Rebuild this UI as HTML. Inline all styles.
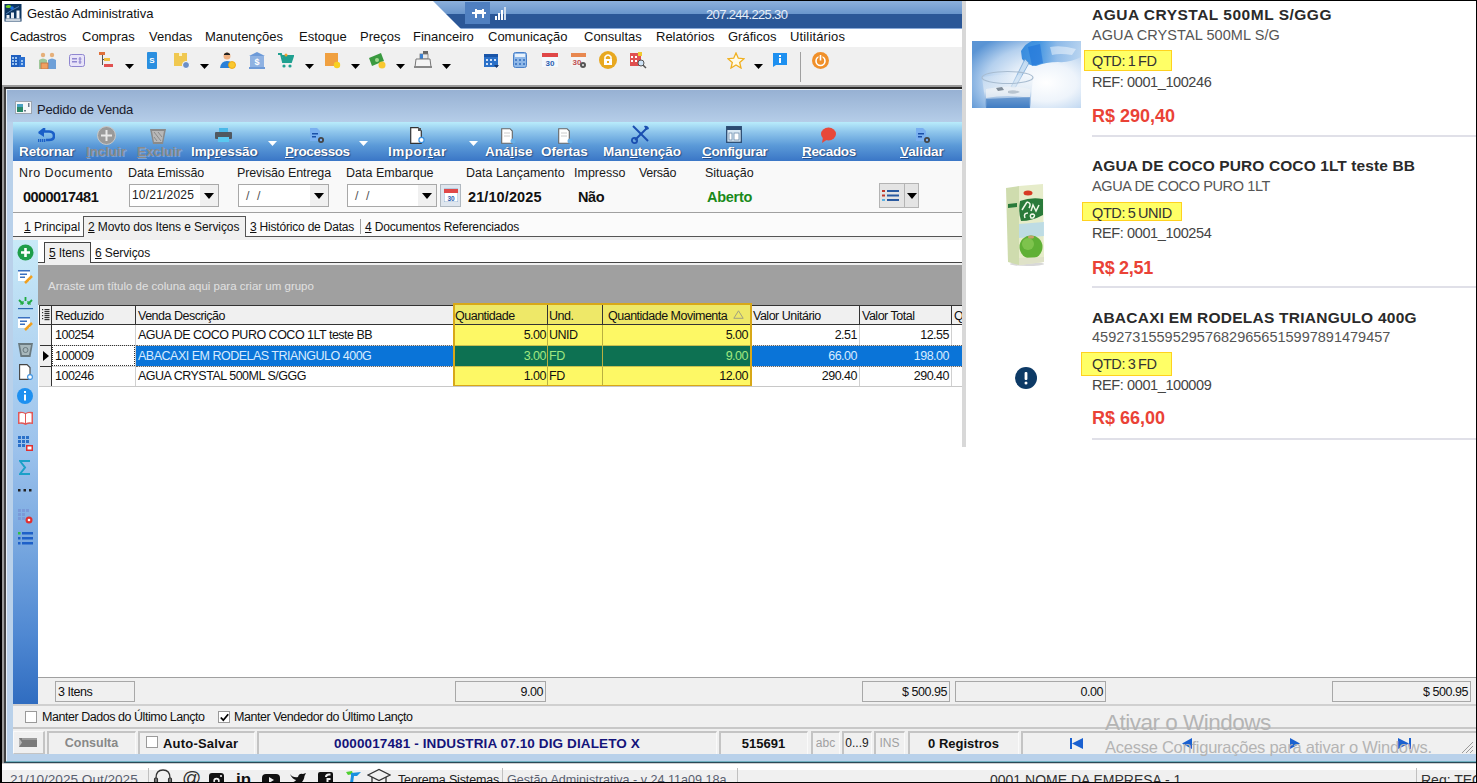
<!DOCTYPE html>
<html><head><meta charset="utf-8">
<style>
*{margin:0;padding:0;box-sizing:border-box}
html,body{width:1477px;height:783px;overflow:hidden;background:#fff;position:relative;font-family:"Liberation Sans",sans-serif;color:#000}
.a{position:absolute}
.t{position:absolute;white-space:nowrap;font-family:"Liberation Sans",sans-serif}
.u{text-decoration:underline}
</style></head><body>
<!-- outer black border -->
<div class="a" style="left:0;top:0;width:1477px;height:1px;background:#000"></div>
<div class="a" style="left:0;top:0;width:2px;height:783px;background:#000"></div>

<!-- title bar -->
<div class="a" style="left:2px;top:1px;width:960px;height:46px;background:#fff"></div>

<!-- RDP bar -->
<div class="a" style="left:433px;top:1px;width:530px;height:28px;background:linear-gradient(#8cb0dc 0,#6a96cc 13px,#2b5797 13px,#2b5797 27px,#8aaad8 27px,#8aaad8 28px);clip-path:polygon(0 0,100% 0,100% 100%,28px 100%)"></div>

<!-- menu bar -->

<!-- toolbar -->
<div class="a" style="left:2px;top:47px;width:960px;height:38px;background:#f0f0f0"></div>
<div class="a" style="left:2px;top:85px;width:960px;height:3px;background:#9a9a9a"></div>

<!-- app icon -->
<svg class="a" style="left:4px;top:4px" width="18" height="18" viewBox="0 0 18 18"><rect x="0.5" y="0" width="17" height="17.5" fill="#0c3560"/><rect x="2.5" y="11" width="3" height="3.5" fill="#e8eef5"/><rect x="7" y="8.5" width="3" height="6" fill="#e8eef5"/><rect x="12.5" y="6.5" width="3" height="8" fill="#f4f8fc"/><rect x="1.5" y="14.5" width="15" height="2.5" fill="#c8d2dc"/><ellipse cx="4.5" cy="2.5" rx="2.8" ry="1.6" fill="#70d020"/><path d="M2 10 L8 6 L15 2.5" stroke="#5a88c0" stroke-width="0.9" fill="none"/><circle cx="8" cy="4" r="1.8" fill="#1a70e0"/></svg>
<div class="t" style="left:27px;top:6px;font-size:13px;line-height:16px;color:#111">Gestão Administrativa</div>
<!-- rdp icons -->
<div class="a" style="left:465px;top:2px;width:25px;height:22px;background:#4f7fc0"></div>
<svg class="a" style="left:472px;top:8px" width="14" height="11" viewBox="0 0 14 11"><rect x="0" y="4" width="14" height="2" fill="#fff"/><rect x="3" y="1" width="2" height="9" fill="#fff"/><rect x="10" y="1" width="2" height="9" fill="#fff"/><rect x="5" y="2" width="5" height="2" fill="#fff"/></svg>
<svg class="a" style="left:495px;top:6px" width="13" height="14" viewBox="0 0 13 14"><rect x="0" y="10" width="2" height="4" fill="#fff"/><rect x="3" y="7" width="2" height="7" fill="#fff"/><rect x="6" y="4" width="2" height="10" fill="#fff"/><rect x="9" y="1" width="2" height="13" fill="#cfdcec"/></svg>
<div class="t" style="left:706px;top:7px;font-size:13px;line-height:15px;color:#e6eef8;letter-spacing:-0.65px">207.244.225.30</div>
<!-- menu -->
<div class="t" style="left:10px;top:29px;font-size:13px;line-height:15px;color:#111;letter-spacing:-0.35px">Cadastros</div>
<div class="t" style="left:82px;top:29px;font-size:13px;line-height:15px;color:#111;letter-spacing:0px">Compras</div>
<div class="t" style="left:149px;top:29px;font-size:13px;line-height:15px;color:#111;letter-spacing:0px">Vendas</div>
<div class="t" style="left:205px;top:29px;font-size:13px;line-height:15px;color:#111;letter-spacing:0px">Manutenções</div>
<div class="t" style="left:299px;top:29px;font-size:13px;line-height:15px;color:#111;letter-spacing:0px">Estoque</div>
<div class="t" style="left:360px;top:29px;font-size:13px;line-height:15px;color:#111;letter-spacing:0px">Preços</div>
<div class="t" style="left:413px;top:29px;font-size:13px;line-height:15px;color:#111;letter-spacing:0px">Financeiro</div>
<div class="t" style="left:488px;top:29px;font-size:13px;line-height:15px;color:#111;letter-spacing:0px">Comunicação</div>
<div class="t" style="left:584px;top:29px;font-size:13px;line-height:15px;color:#111;letter-spacing:0px">Consultas</div>
<div class="t" style="left:656px;top:29px;font-size:13px;line-height:15px;color:#111;letter-spacing:0px">Relatórios</div>
<div class="t" style="left:728px;top:29px;font-size:13px;line-height:15px;color:#111;letter-spacing:0px">Gráficos</div>
<div class="t" style="left:790px;top:29px;font-size:13px;line-height:15px;color:#111;letter-spacing:0.15px">Utilitários</div>
<!-- toolbar icons -->
<svg class="a" style="left:11px;top:54px" width="14" height="13" viewBox="0 0 14 13"><rect x="0" y="1" width="10" height="12" fill="#1f5fbf"/><rect x="8" y="3" width="6" height="10" fill="#2a6fd0"/><g fill="#9cc4f0"><rect x="1" y="3" width="2" height="2"/><rect x="4" y="3" width="2" height="2"/><rect x="1" y="6" width="2" height="2"/><rect x="4" y="6" width="2" height="2"/><rect x="1" y="9" width="2" height="2"/><rect x="4" y="9" width="2" height="2"/><rect x="10" y="6" width="2" height="2"/><rect x="10" y="9" width="2" height="2"/></g></svg>
<svg class="a" style="left:38px;top:52px" width="19" height="17" viewBox="0 0 19 17"><circle cx="5" cy="3" r="2.2" fill="#e6b07a"/><path d="M1 8 Q5 5 9 8 L9 17 L1 17Z" fill="#9fc79a"/><circle cx="14" cy="3" r="2.2" fill="#e6b07a"/><path d="M10 8 Q14 5 18 8 L18 17 L10 17Z" fill="#6ea0d8"/><rect x="3" y="11" width="7" height="6" fill="#f0a060" stroke="#c07040" stroke-width="0.8"/></svg>
<svg class="a" style="left:69px;top:54px" width="16" height="13" viewBox="0 0 16 13"><rect x="0.5" y="0.5" width="15" height="12" rx="2" fill="#e8e4f8" stroke="#8f86d0"/><rect x="3" y="4" width="5" height="1.5" fill="#8f86d0"/><rect x="3" y="7" width="5" height="1.5" fill="#8f86d0"/><path d="M11 3 L11 10 M9.5 5 L12.5 5 M9.5 8 L12.5 8" stroke="#8f86d0" stroke-width="1.2"/></svg>
<svg class="a" style="left:99px;top:52px" width="15" height="16" viewBox="0 0 15 16"><rect x="0" y="0" width="6" height="3" fill="#e0703a"/><rect x="3" y="3" width="1" height="10" fill="#555"/><rect x="5" y="6" width="6" height="3" fill="#f0c040"/><rect x="5" y="12" width="9" height="3" fill="#e05050"/><rect x="3" y="7" width="2" height="1" fill="#555"/></svg>
<svg class="a" style="left:125px;top:64px" width="9" height="5" viewBox="0 0 9 5"><path d="M0 0 L9 0 L4.5 5Z" fill="#000"/></svg>
<svg class="a" style="left:147px;top:52px" width="10" height="17" viewBox="0 0 10 17"><rect x="0" y="0" width="10" height="17" rx="1" fill="#2a8fe0"/><text x="5" y="11" font-size="8" fill="#fff" text-anchor="middle" font-family="Liberation Sans" font-weight="700">S</text></svg>
<svg class="a" style="left:174px;top:53px" width="16" height="16" viewBox="0 0 16 16"><rect x="0" y="0" width="13" height="13" fill="#f0c850"/><rect x="5" y="0" width="3" height="3" fill="#fff3c0"/><circle cx="12" cy="12" r="3.5" fill="#6b8fc8" stroke="#fff" stroke-width="1"/></svg>
<svg class="a" style="left:200px;top:64px" width="9" height="5" viewBox="0 0 9 5"><path d="M0 0 L9 0 L4.5 5Z" fill="#000"/></svg>
<svg class="a" style="left:220px;top:52px" width="16" height="17" viewBox="0 0 16 17"><circle cx="7" cy="4" r="3.5" fill="#f0b080"/><path d="M4 2 Q7 -1 10 2 L10 3 L4 3Z" fill="#222"/><path d="M0 16 Q1 9 7 9 Q12 9 13 13 L13 16Z" fill="#2a80d8"/><circle cx="12" cy="13" r="3.5" fill="#f8c830" stroke="#f0a000" stroke-width="0.8"/></svg>
<svg class="a" style="left:249px;top:52px" width="16" height="17" viewBox="0 0 16 17"><path d="M8 0 L16 4 L0 4Z" fill="#6d9ad8"/><rect x="1" y="4" width="14" height="11" fill="#8fb2e2"/><rect x="0" y="15" width="16" height="2" fill="#6d9ad8"/><text x="8" y="13" font-size="9" fill="#fff" text-anchor="middle" font-family="Liberation Sans" font-weight="700">$</text></svg>
<svg class="a" style="left:278px;top:53px" width="16" height="15" viewBox="0 0 16 15"><path d="M0 1 L3 1 L5 9 L13 9 L15 3 L4 3" stroke="#20a090" stroke-width="2" fill="none"/><rect x="5" y="3" width="9" height="5" fill="#20a090"/><circle cx="6" cy="13" r="1.6" fill="#20a090"/><circle cx="12" cy="13" r="1.6" fill="#20a090"/><circle cx="8" cy="2" r="1.5" fill="#f0a030"/></svg>
<svg class="a" style="left:305px;top:64px" width="9" height="5" viewBox="0 0 9 5"><path d="M0 0 L9 0 L4.5 5Z" fill="#000"/></svg>
<svg class="a" style="left:325px;top:53px" width="16" height="16" viewBox="0 0 16 16"><rect x="0" y="0" width="13" height="13" fill="#f0a040"/><circle cx="12" cy="12" r="3.2" fill="#f8d020"/></svg>
<svg class="a" style="left:351px;top:64px" width="9" height="5" viewBox="0 0 9 5"><path d="M0 0 L9 0 L4.5 5Z" fill="#000"/></svg>
<svg class="a" style="left:369px;top:53px" width="18" height="16" viewBox="0 0 18 16"><path d="M0 5 L12 0 L15 8 L3 13Z" fill="#3a9a40"/><circle cx="8" cy="7" r="2" fill="#a0d890"/><circle cx="13" cy="12" r="3.5" fill="#f8c830"/></svg>
<svg class="a" style="left:396px;top:64px" width="9" height="5" viewBox="0 0 9 5"><path d="M0 0 L9 0 L4.5 5Z" fill="#000"/></svg>
<svg class="a" style="left:414px;top:51px" width="18" height="18" viewBox="0 0 18 18"><rect x="9" y="0" width="5" height="3" fill="#666"/><rect x="6" y="3" width="8" height="5" fill="#e8e8e8" stroke="#777" stroke-width="0.8"/><rect x="6" y="3" width="3" height="5" fill="#3a80d0"/><path d="M2 8 L16 8 L17 16 L1 16Z" fill="#f4f4f4" stroke="#777" stroke-width="1"/><rect x="0" y="15" width="18" height="2" fill="#888"/></svg>
<svg class="a" style="left:442px;top:64px" width="9" height="5" viewBox="0 0 9 5"><path d="M0 0 L9 0 L4.5 5Z" fill="#000"/></svg>
<svg class="a" style="left:484px;top:53px" width="15" height="15" viewBox="0 0 15 15"><rect x="0" y="1" width="14" height="13" fill="#2a70c8"/><rect x="0" y="1" width="14" height="3" fill="#1a55a8"/><g fill="#cfe0f8"><rect x="2" y="6" width="2" height="2"/><rect x="6" y="6" width="2" height="2"/><rect x="10" y="6" width="2" height="2"/><rect x="2" y="10" width="2" height="2"/><rect x="6" y="10" width="2" height="2"/></g><path d="M10 12 L15 12 L12.5 15Z" fill="#1a3a70"/></svg>
<svg class="a" style="left:513px;top:52px" width="14" height="16" viewBox="0 0 14 16"><rect x="0.5" y="0.5" width="13" height="15" rx="2" fill="#8fb8e8" stroke="#4a80c8"/><rect x="2" y="2" width="10" height="3" fill="#e8f2fc"/><g fill="#4a80c8"><rect x="2" y="7" width="2" height="2"/><rect x="6" y="7" width="2" height="2"/><rect x="10" y="7" width="2" height="2"/><rect x="2" y="11" width="2" height="2"/><rect x="6" y="11" width="2" height="2"/><rect x="10" y="11" width="2" height="2"/></g></svg>
<svg class="a" style="left:542px;top:52px" width="16" height="16" viewBox="0 0 16 16"><rect x="0" y="1" width="16" height="14" fill="#f4f8fc"/><rect x="0" y="1" width="16" height="4" fill="#e04848"/><text x="8" y="13.5" font-size="8" fill="#2a60b0" text-anchor="middle" font-family="Liberation Sans" font-weight="700">30</text></svg>
<svg class="a" style="left:571px;top:52px" width="16" height="17" viewBox="0 0 16 17"><rect x="0" y="1" width="15" height="13" fill="#f4f4f4"/><rect x="0" y="1" width="15" height="4" fill="#e88850"/><text x="6" y="13" font-size="8" fill="#c05050" text-anchor="middle" font-family="Liberation Sans" font-weight="700">30</text><circle cx="12" cy="13" r="3" fill="#555"/><circle cx="12" cy="13" r="1" fill="#eee"/></svg>
<svg class="a" style="left:599px;top:51px" width="18" height="18" viewBox="0 0 18 18"><circle cx="9" cy="9" r="9" fill="#e8a820"/><path d="M6 8 L6 6 Q9 2 12 6 L12 8" stroke="#fff" stroke-width="1.5" fill="none"/><rect x="5" y="8" width="8" height="6" fill="#fff"/><rect x="8" y="10" width="2" height="2" fill="#e8a820"/></svg>
<svg class="a" style="left:630px;top:52px" width="17" height="17" viewBox="0 0 17 17"><rect x="0" y="1" width="11" height="13" fill="#e05050"/><g fill="#fff"><rect x="1" y="4" width="2" height="2"/><rect x="5" y="4" width="2" height="2"/><rect x="1" y="8" width="2" height="2"/><rect x="5" y="8" width="2" height="2"/></g><rect x="8" y="0" width="4" height="4" fill="#f0c830"/><circle cx="11" cy="11" r="3" fill="#cfe4f8" stroke="#555" stroke-width="1"/><path d="M13 13 L16 16" stroke="#555" stroke-width="1.5"/></svg>
<svg class="a" style="left:727px;top:52px" width="18" height="17" viewBox="0 0 18 17"><path d="M9 1 L11.3 6.2 L17 6.7 L12.7 10.4 L14 16 L9 13 L4 16 L5.3 10.4 L1 6.7 L6.7 6.2Z" fill="#fffbe8" stroke="#f0b020" stroke-width="1.3"/></svg>
<svg class="a" style="left:754px;top:64px" width="9" height="5" viewBox="0 0 9 5"><path d="M0 0 L9 0 L4.5 5Z" fill="#000"/></svg>
<svg class="a" style="left:773px;top:53px" width="14" height="14" viewBox="0 0 14 14"><path d="M0 0 L14 0 L14 12 L3 12 L0 14Z" fill="#1e90f0"/><rect x="6" y="2" width="2" height="2" fill="#fff"/><rect x="6" y="5" width="2" height="5" fill="#fff"/></svg>
<div class="a" style="left:800px;top:52px;width:1px;height:30px;background:#a0a0a0"></div>
<svg class="a" style="left:812px;top:52px" width="17" height="17" viewBox="0 0 17 17"><circle cx="8.5" cy="8.5" r="8.5" fill="#f0902a"/><circle cx="8.5" cy="9" r="4.5" stroke="#fff" stroke-width="1.6" fill="none"/><rect x="6.5" y="2" width="4" height="6" fill="#f0902a"/><rect x="7.7" y="3" width="1.6" height="5.5" fill="#fff"/></svg>

<!-- child window frame -->
<div class="a" style="left:2px;top:88px;width:1475px;height:676px;background:#b9d1ea"></div>
<div class="a" style="left:2px;top:85px;width:2px;height:678px;background:#9a9a9a"></div>
<div class="a" style="left:4px;top:87px;width:2px;height:676px;background:#404040"></div>
<div class="a" style="left:4px;top:87px;width:1473px;height:2px;background:#2a2a2a"></div>
<div class="a" style="left:6px;top:89px;width:1px;height:672px;background:#e8f0f8"></div>
<div class="a" style="left:6px;top:89px;width:1471px;height:1px;background:#e8f0f8"></div>
<div class="a" style="left:7px;top:90px;width:1470px;height:32px;background:linear-gradient(#97b1d3,#b5cde8)"></div>

<!-- blue toolbar -->
<div class="a" style="left:13px;top:122px;width:1464px;height:39px;background:linear-gradient(#b9ecfb 0,#8fc6ec 25%,#5b9ad8 60%,#3a76c6 100%)"></div>

<!-- form area -->
<div class="a" style="left:13px;top:161px;width:1464px;height:51px;background:#f9f9f9"></div>
<div class="a" style="left:13px;top:212px;width:1464px;height:1px;background:#a0a0a0"></div>

<!-- tab strip -->
<div class="a" style="left:13px;top:213px;width:1464px;height:24px;background:#fbfbfb"></div>

<!-- child title -->
<svg class="a" style="left:15px;top:101px" width="17" height="13" viewBox="0 0 17 13"><rect x="0.5" y="0.5" width="16" height="12" fill="#f4f6f8" stroke="#9aa4b0"/><rect x="2" y="3" width="6" height="8" fill="#2a8a6a"/><rect x="2" y="3" width="6" height="3" fill="#4aa0c0"/><rect x="13" y="2" width="1.5" height="4" fill="#6a7a8a"/><rect x="9" y="9" width="2" height="1.5" fill="#6a7a8a"/></svg>
<div class="t" style="left:37px;top:102px;font-size:13px;line-height:15px;color:#1a1a2a;letter-spacing:-0.2px">Pedido de Venda</div>
<!-- blue toolbar content -->
<style>.tb{position:absolute;white-space:nowrap;font-family:"Liberation Sans",sans-serif;font-size:13.5px;font-weight:700;line-height:15px;top:144px;color:#fff;letter-spacing:-0.1px;text-shadow:0 0 1px #2a4a7a,1px 1px 1px rgba(20,50,100,.6)}
.tbd{color:#8a8a8a;text-shadow:1px 1px 0 rgba(220,230,240,.35)}
.tb u{text-decoration:underline;text-underline-offset:1px}</style>
<svg class="a" style="left:37px;top:128px" width="18" height="15" viewBox="0 0 18 15"><path d="M2 5 L7 1 L7 3.5 L12 3.5 Q17 3.5 17 8 Q17 12 12 12 L9 12" stroke="#1a5fc8" stroke-width="2.6" fill="none"/><path d="M1 5 L7 0.5 L7 9Z" fill="#1a5fc8"/><g fill="#1a5fc8"><rect x="1" y="11" width="1.3" height="3"/><rect x="3" y="11" width="1.3" height="3"/><rect x="5" y="11" width="1.3" height="3"/><rect x="7" y="11" width="1.3" height="3"/></g></svg>
<div class="tb" style="left:19px">Retornar</div>
<svg class="a" style="left:97px;top:126px" width="19" height="19" viewBox="0 0 19 19"><circle cx="9.5" cy="9.5" r="9" fill="#9a9a9a" stroke="#c8c8c8" stroke-width="1"/><path d="M9.5 4 L9.5 15 M4 9.5 L15 9.5" stroke="#e8e8e8" stroke-width="2"/></svg>
<div class="tb tbd" style="left:86px"><u>I</u>ncluir</div>
<svg class="a" style="left:150px;top:129px" width="16" height="15" viewBox="0 0 16 15"><path d="M0 0 L16 0 L13 15 L3 15Z" fill="#8a8a8a"/><path d="M2 2 L14 2 L12 13 L4 13Z" fill="#b8b8b8"/><path d="M4 3 L11 12 M8 3 L12 8 M4 8 L7 12" stroke="#8a8a8a" stroke-width="1"/></svg>
<div class="tb tbd" style="left:137px"><u>E</u>xcluir</div>
<svg class="a" style="left:215px;top:128px" width="17" height="14" viewBox="0 0 17 14"><rect x="4" y="0" width="9" height="4" fill="#4ab8e8"/><rect x="0" y="4" width="17" height="7" rx="1" fill="#505860"/><rect x="3" y="9" width="11" height="5" fill="#5ac8f0"/></svg>
<div class="tb" style="left:191px">Imp<u>r</u>essão</div>
<svg class="a" style="left:268px;top:141px" width="9" height="5" viewBox="0 0 9 5"><path d="M0 0 L9 0 L4.5 5Z" fill="#fff"/></svg>
<svg class="a" style="left:310px;top:128px" width="15" height="16" viewBox="0 0 15 16"><path d="M0 0 L7 0 L10 3 L10 13 L0 13Z" fill="#7ab0f0"/><rect x="2" y="5" width="6" height="1.5" fill="#1a4fa8"/><rect x="2" y="8" width="4" height="1.5" fill="#1a4fa8"/><circle cx="11" cy="12" r="3" fill="#444"/><circle cx="11" cy="12" r="1.2" fill="#7ab0f0"/></svg>
<div class="tb" style="left:285px;letter-spacing:-0.4px"><u>P</u>rocessos</div>
<svg class="a" style="left:359px;top:141px" width="9" height="5" viewBox="0 0 9 5"><path d="M0 0 L9 0 L4.5 5Z" fill="#fff"/></svg>
<svg class="a" style="left:410px;top:127px" width="15" height="17" viewBox="0 0 15 17"><path d="M0.7 0.7 L8 0.7 L11.3 4 L11.3 16.3 L0.7 16.3Z" fill="#fff" stroke="#333" stroke-width="1.2"/><circle cx="11.5" cy="13" r="2.6" fill="#fff" stroke="#3a90e0" stroke-width="1.2"/><rect x="8" y="1" width="3" height="3" fill="#555"/></svg>
<div class="tb" style="left:388px;letter-spacing:0.5px">Impor<u>t</u>ar</div>
<svg class="a" style="left:469px;top:141px" width="9" height="5" viewBox="0 0 9 5"><path d="M0 0 L9 0 L4.5 5Z" fill="#fff"/></svg>
<svg class="a" style="left:501px;top:128px" width="15" height="16" viewBox="0 0 15 16"><path d="M0.7 0.7 L9 0.7 L11.3 3 L11.3 15.3 L0.7 15.3Z" fill="#fff" stroke="#666" stroke-width="1.1"/><path d="M3 5 L9 5 M3 8 L9 8" stroke="#ccc" stroke-width="1"/><circle cx="12" cy="13" r="2.5" fill="#6ab0e8"/></svg>
<div class="tb" style="left:485px">Aná<u>l</u>ise</div>
<svg class="a" style="left:558px;top:128px" width="15" height="16" viewBox="0 0 15 16"><path d="M0.7 0.7 L9 0.7 L11.3 3 L11.3 15.3 L0.7 15.3Z" fill="#fff" stroke="#666" stroke-width="1.1"/><path d="M3 5 L9 5 M3 8 L9 8" stroke="#ccc" stroke-width="1"/><circle cx="12" cy="13" r="2.5" fill="#6ab0e8"/></svg>
<div class="tb" style="left:541px">Ofertas</div>
<svg class="a" style="left:631px;top:125px" width="19" height="19" viewBox="0 0 19 19"><path d="M2 1 L17 16" stroke="#1a4fb0" stroke-width="2"/><path d="M16 3 L4 15" stroke="#1a4fb0" stroke-width="2"/><circle cx="3.5" cy="15.5" r="2.6" fill="none" stroke="#1a4fb0" stroke-width="1.8"/><path d="M13 1 Q17 0 18 4 L15 5Z" fill="#1a4fb0"/></svg>
<div class="tb" style="left:603px">Man<u>u</u>tenção</div>
<svg class="a" style="left:726px;top:126px" width="16" height="17" viewBox="0 0 16 17"><rect x="0.7" y="0.7" width="14.6" height="15.6" fill="#d8e8f4" stroke="#2a4a70" stroke-width="1.3"/><rect x="1" y="1" width="14" height="3" fill="#2a4a70"/><rect x="3" y="7" width="3" height="7" fill="#fff" stroke="#6a8aaa" stroke-width="0.8"/><rect x="8" y="7" width="5" height="7" fill="#fff" stroke="#6a8aaa" stroke-width="0.8"/></svg>
<div class="tb" style="left:702px;letter-spacing:-0.35px"><u>C</u>onfigurar</div>
<svg class="a" style="left:820px;top:127px" width="16" height="16" viewBox="0 0 16 16"><ellipse cx="8.5" cy="7" rx="7.5" ry="6.5" fill="#e8483a"/><path d="M3 10 L2 16 L8 12Z" fill="#e8483a"/></svg>
<div class="tb" style="left:802px;letter-spacing:-0.35px"><u>R</u>ecados</div>
<svg class="a" style="left:916px;top:128px" width="15" height="16" viewBox="0 0 15 16"><path d="M0 0 L7 0 L10 3 L10 13 L0 13Z" fill="#7ab0f0"/><rect x="2" y="5" width="6" height="1.5" fill="#1a4fa8"/><rect x="2" y="8" width="4" height="1.5" fill="#1a4fa8"/><circle cx="11" cy="12" r="3" fill="#444"/><circle cx="11" cy="12" r="1.2" fill="#7ab0f0"/></svg>
<div class="tb" style="left:900px"><u>V</u>alidar</div>

<!-- form labels -->
<style>.fl{position:absolute;white-space:nowrap;font-family:"Liberation Sans",sans-serif;font-size:12.5px;line-height:14px;top:166px;color:#1a1a1a;letter-spacing:0px}
.fv{position:absolute;white-space:nowrap;font-family:"Liberation Sans",sans-serif;font-size:14.5px;font-weight:700;line-height:16px;top:189px;color:#111}
.dd{position:absolute;top:184px;height:23px;background:#fff;border:1px solid #a8a8a8}
.dd i{position:absolute;right:0;top:0;width:18px;height:21px;background:#f0f0f0}
.dd i:after{content:"";position:absolute;left:4px;top:8px;border-left:5px solid transparent;border-right:5px solid transparent;border-top:6px solid #000}</style>
<div class="fl" style="left:19px;letter-spacing:0.5px">Nro Documento</div>
<div class="fl" style="left:128px;letter-spacing:-0.15px">Data Emissão</div>
<div class="fl" style="left:237px;letter-spacing:-0.12px">Previsão Entrega</div>
<div class="fl" style="left:346px">Data Embarque</div>
<div class="fl" style="left:466px">Data Lançamento</div>
<div class="fl" style="left:574px">Impresso</div>
<div class="fl" style="left:639px;letter-spacing:-0.3px">Versão</div>
<div class="fl" style="left:705px">Situação</div>
<div class="fv" style="left:23px;letter-spacing:-0.55px">0000017481</div>
<div class="dd" style="left:129px;width:90px"><i></i></div>
<div class="t" style="left:132px;top:188px;font-size:12px;line-height:14px;color:#222;letter-spacing:0.2px">10/21/2025</div>
<div class="dd" style="left:238px;width:91px"><i></i></div>
<div class="t" style="left:246px;top:189px;font-size:12.5px;line-height:14px;color:#555;letter-spacing:2px">/&nbsp;/</div>
<div class="dd" style="left:347px;width:90px"><i></i></div>
<div class="t" style="left:355px;top:189px;font-size:12.5px;line-height:14px;color:#555;letter-spacing:2px">/&nbsp;/</div>
<div class="a" style="left:440px;top:184px;width:21px;height:23px;background:#dfe6ee;border:1px solid #b0b8c0"></div>
<svg class="a" style="left:444px;top:188px" width="14" height="14" viewBox="0 0 14 14"><rect x="0" y="1" width="14" height="13" fill="#fff" stroke="#7aa0c8" stroke-width="0.8"/><rect x="0" y="1" width="14" height="4" fill="#e04848"/><text x="7" y="12.5" font-size="6.5" fill="#2a60b0" text-anchor="middle" font-family="Liberation Sans" font-weight="700">30</text></svg>
<div class="fv" style="left:468px;letter-spacing:0.1px">21/10/2025</div>
<div class="fv" style="left:578px;letter-spacing:-0.45px">Não</div>
<div class="fv" style="left:707px;color:#1a8a1a;letter-spacing:-0.28px">Aberto</div>
<div class="a" style="left:879px;top:183px;width:40px;height:25px;background:#e4e4e4;border:1px solid #b4b4b4"></div>
<div class="a" style="left:904px;top:184px;width:1px;height:23px;background:#b4b4b4"></div>
<svg class="a" style="left:882px;top:189px" width="18" height="13" viewBox="0 0 18 13"><rect x="0" y="1" width="3" height="2" fill="#c0392b"/><rect x="0" y="5.5" width="3" height="2" fill="#c0392b"/><rect x="0" y="10" width="3" height="2" fill="#5ab0e0"/><rect x="5" y="1" width="12" height="2" fill="#2a5aa0"/><rect x="5" y="5.5" width="12" height="2" fill="#2a5aa0"/><rect x="5" y="10" width="12" height="2" fill="#2a5aa0"/></svg>
<svg class="a" style="left:907px;top:193px" width="10" height="6" viewBox="0 0 10 6"><path d="M0 0 L10 0 L5 6Z" fill="#000"/></svg>

<!-- tabs -->
<style>.tab{position:absolute;white-space:nowrap;font-family:"Liberation Sans",sans-serif;font-size:12px;line-height:14px;top:220px;color:#111}
.tab u{text-decoration:underline;text-underline-offset:1px}</style>
<div class="a" style="left:13px;top:236px;width:1464px;height:1px;background:#555"></div>
<div class="a" style="left:83px;top:216px;width:163px;height:21px;background:#f0f0f0;border:1px solid #555;border-bottom:none"></div>
<div class="a" style="left:14px;top:236px;width:70px;height:1px;background:#555"></div>
<div class="tab" style="left:24px"><u>1</u> Principal</div>
<div class="tab" style="left:88px;letter-spacing:-0.1px"><u>2</u> Movto dos Itens e Serviços</div>
<div class="tab" style="left:250px;letter-spacing:-0.2px"><u>3</u> Histórico de Datas</div>
<div class="a" style="left:360px;top:219px;width:1px;height:15px;background:#a0a0a0"></div>
<div class="tab" style="left:365px;letter-spacing:-0.15px"><u>4</u> Documentos Referenciados</div>

<!-- subtab strip -->
<div class="a" style="left:13px;top:237px;width:1464px;height:28px;background:#fff"></div>

<!-- sidebar -->
<div class="a" style="left:13px;top:240px;width:25px;height:465px;background:linear-gradient(#c8eaf8 0,#b6d8f2 20%,#9cc2ec 45%,#78a8e0 65%,#4f88d2 85%,#2f6cc0 100%)"></div>

<!-- group panel -->
<div class="a" style="left:38px;top:265px;width:1439px;height:40px;background:#a0a0a0"></div>
<div class="t" style="left:48px;top:279px;font-size:11.5px;line-height:14px;color:#e0e0e0">Arraste um título de coluna aqui para criar um grupo</div>

<!-- grid -->
<div class="a" style="left:38px;top:305px;width:1439px;height:373px;background:#fff"></div>

<!-- footer -->
<div class="a" style="left:38px;top:677px;width:1439px;height:1px;background:#a0a0a0"></div>
<div class="a" style="left:38px;top:678px;width:1439px;height:26px;background:#f0f0f0"></div>

<!-- tab row refinements -->
<div class="a" style="left:13px;top:237px;width:1464px;height:3px;background:#f0f0f0"></div>
<!-- subtabs -->
<div class="a" style="left:38px;top:262px;width:1439px;height:1px;background:#444"></div>
<div class="a" style="left:38px;top:263px;width:1439px;height:2px;background:#f0f0f0"></div>
<div class="a" style="left:44px;top:242px;width:47px;height:21px;background:#f0f0f0;border:1px solid #444;border-bottom:none"></div>
<div class="tab" style="left:49px;top:246px;letter-spacing:-0.1px"><u>5</u> Itens</div>
<div class="tab" style="left:95px;top:246px;letter-spacing:-0.1px"><u>6</u> Serviços</div>

<!-- sidebar icons -->
<svg class="a" style="left:17px;top:244px" width="17" height="17" viewBox="0 0 17 17"><circle cx="8.5" cy="8.5" r="8" fill="#1e9e4a"/><path d="M8.5 4 L8.5 13 M4 8.5 L13 8.5" stroke="#fff" stroke-width="2.6"/></svg>
<svg class="a" style="left:18px;top:270px" width="15" height="14" viewBox="0 0 15 14"><rect x="0" y="1" width="12" height="10" fill="#fff"/><rect x="0" y="0" width="12" height="1.5" fill="#3a70c0"/><rect x="2" y="3.5" width="7" height="1.5" fill="#3a70c0"/><rect x="2" y="6.5" width="5" height="1.5" fill="#3a70c0"/><path d="M7 13 L14 6" stroke="#f0a020" stroke-width="2.5"/></svg>
<svg class="a" style="left:18px;top:297px" width="15" height="13" viewBox="0 0 15 13"><path d="M1 3 L5 7 M14 3 L10 7 M7.5 0 L7.5 4" stroke="#1eaa40" stroke-width="1.8"/><path d="M5 7 L2 7 M5 7 L5 4 M10 7 L13 7 M10 7 L10 4" stroke="#1eaa40" stroke-width="1.2"/><rect x="0" y="11" width="15" height="1.2" fill="#2a6ab0"/></svg>
<svg class="a" style="left:18px;top:317px" width="15" height="14" viewBox="0 0 15 14"><rect x="0" y="1" width="12" height="10" fill="#fff"/><rect x="0" y="0" width="12" height="1.5" fill="#3a70c0"/><rect x="2" y="3.5" width="7" height="1.5" fill="#3a70c0"/><rect x="2" y="6.5" width="5" height="1.5" fill="#3a70c0"/><path d="M7 13 L14 6" stroke="#f0a020" stroke-width="2.5"/></svg>
<svg class="a" style="left:18px;top:343px" width="15" height="14" viewBox="0 0 15 14"><path d="M0 0 L15 0 L12.5 14 L2.5 14Z" fill="#6a7a80"/><path d="M2 2 L13 2 L11 12 L4 12Z" fill="#a8b8bc"/><circle cx="7.5" cy="7" r="2.5" fill="none" stroke="#6a7a80" stroke-width="1"/></svg>
<svg class="a" style="left:19px;top:364px" width="14" height="16" viewBox="0 0 14 16"><path d="M0.6 0.6 L8 0.6 L11 3.6 L11 15.4 L0.6 15.4Z" fill="#fff" stroke="#444" stroke-width="1.1"/><circle cx="11" cy="13" r="2.4" fill="#fff" stroke="#3a90e0" stroke-width="1.1"/></svg>
<svg class="a" style="left:17px;top:388px" width="16" height="16" viewBox="0 0 16 16"><circle cx="8" cy="8" r="8" fill="#1e90f0"/><rect x="7" y="3" width="2" height="2" fill="#fff"/><rect x="7" y="6.5" width="2" height="6" fill="#fff"/></svg>
<svg class="a" style="left:18px;top:411px" width="15" height="14" viewBox="0 0 15 14"><path d="M0 1 Q4 0 7.5 2 Q11 0 15 1 L15 13 Q11 12 7.5 14 Q4 12 0 13Z" fill="#e05858"/><path d="M1.5 2.5 Q4.5 1.5 7 3 L7 12 Q4.5 11 1.5 11.5Z M8 3 Q10.5 1.5 13.5 2.5 L13.5 11.5 Q10.5 11 8 12Z" fill="#fff"/></svg>
<svg class="a" style="left:18px;top:436px" width="15" height="15" viewBox="0 0 15 15"><g fill="#2a70c8"><rect x="0" y="0" width="3" height="3"/><rect x="4" y="0" width="3" height="3"/><rect x="8" y="0" width="3" height="3"/><rect x="0" y="4" width="3" height="3"/><rect x="4" y="4" width="3" height="3"/><rect x="8" y="4" width="3" height="3"/><rect x="0" y="8" width="3" height="3"/><rect x="4" y="8" width="3" height="3"/></g><rect x="8" y="9" width="7" height="6" fill="#e03030"/><rect x="9.5" y="10.5" width="4" height="3" fill="#fff"/></svg>
<svg class="a" style="left:19px;top:460px" width="12" height="15" viewBox="0 0 12 15"><path d="M11 1 L1 1 L6 7.5 L1 14 L11 14" stroke="#1aa0c8" stroke-width="2" fill="none"/></svg>
<svg class="a" style="left:18px;top:489px" width="14" height="3" viewBox="0 0 14 3"><rect x="0" y="0" width="2.5" height="2.5" fill="#222"/><rect x="5.5" y="0" width="2.5" height="2.5" fill="#222"/><rect x="11" y="0" width="2.5" height="2.5" fill="#222"/></svg>
<svg class="a" style="left:18px;top:509px" width="15" height="15" viewBox="0 0 15 15"><g fill="#7a9ad8"><rect x="0" y="0" width="3" height="3"/><rect x="4" y="0" width="3" height="3"/><rect x="8" y="0" width="3" height="3"/><rect x="0" y="4" width="3" height="3"/><rect x="4" y="4" width="3" height="3"/><rect x="0" y="8" width="3" height="3"/><rect x="4" y="8" width="3" height="3"/></g><circle cx="11" cy="11" r="3.5" fill="#e03030"/><circle cx="11" cy="11" r="1.3" fill="#fff"/></svg>
<svg class="a" style="left:18px;top:532px" width="15" height="14" viewBox="0 0 15 14"><g fill="#30c040"><rect x="0" y="0" width="2.5" height="2.5"/></g><g fill="#1e60c8"><rect x="0" y="5" width="2.5" height="2.5"/><rect x="0" y="10" width="2.5" height="2.5"/><rect x="4" y="0" width="11" height="2.5"/><rect x="4" y="5" width="11" height="2.5"/><rect x="4" y="10" width="11" height="2.5"/></g></svg>

<!-- grid header -->
<style>.gh{position:absolute;white-space:nowrap;font-family:"Liberation Sans",sans-serif;font-size:12.5px;line-height:14px;top:309px;color:#111;letter-spacing:-0.5px}
.gc{position:absolute;white-space:nowrap;font-family:"Liberation Sans",sans-serif;font-size:12.5px;line-height:14px;color:#111;letter-spacing:-0.5px}
.r{text-align:right}</style>
<div class="a" style="left:39px;top:305px;width:923px;height:81px;background:#fff"></div>
<div class="a" style="left:39px;top:305px;width:923px;height:20px;background:#f0f0f0"></div>
<div class="a" style="left:39px;top:305px;width:923px;height:1px;background:#333"></div>
<div class="a" style="left:39px;top:324px;width:923px;height:1px;background:#333"></div>
<div class="a" style="left:39px;top:305px;width:1px;height:82px;background:#333"></div>
<div class="a" style="left:39px;top:325px;width:13px;height:61px;background:#f0f0f0"></div>
<div class="a" style="left:51px;top:305px;width:1px;height:82px;background:#333"></div>
<div class="a" style="left:39px;top:386px;width:13px;height:1px;background:#333"></div>
<!-- column lines header -->
<div class="a" style="left:135px;top:305px;width:1px;height:20px;background:#333"></div>
<div class="a" style="left:859px;top:305px;width:1px;height:20px;background:#333"></div>
<div class="a" style="left:951px;top:305px;width:1px;height:20px;background:#333"></div>
<!-- row lines -->
<div class="a" style="left:52px;top:345px;width:910px;height:1px;background:#d8d8d8"></div>
<div class="a" style="left:52px;top:366px;width:910px;height:1px;background:#d8d8d8"></div>
<div class="a" style="left:52px;top:386px;width:910px;height:1px;background:#d0d0d0"></div>
<div class="a" style="left:40px;top:345px;width:11px;height:1px;background:#333"></div>
<div class="a" style="left:40px;top:366px;width:11px;height:1px;background:#333"></div>
<div class="a" style="left:135px;top:325px;width:1px;height:61px;background:#d0d0d0"></div>
<div class="a" style="left:859px;top:325px;width:1px;height:61px;background:#d0d0d0"></div>
<div class="a" style="left:951px;top:325px;width:1px;height:61px;background:#d0d0d0"></div>
<!-- selected row -->
<div class="a" style="left:136px;top:346px;width:826px;height:20px;background:#0a74d8"></div>
<div class="a" style="left:136px;top:345px;width:826px;height:1px;border-top:1px dotted #666"></div>
<div class="a" style="left:136px;top:366px;width:826px;height:1px;border-top:1px dotted #666"></div>
<div class="a" style="left:52px;top:345px;width:83px;height:21px;border:1px dotted #333"></div>
<svg class="a" style="left:43px;top:351px" width="6" height="10" viewBox="0 0 6 10"><path d="M0 0 L6 5 L0 10Z" fill="#000"/></svg>
<!-- header icon -->
<svg class="a" style="left:42px;top:309px" width="8" height="12" viewBox="0 0 8 12"><g fill="#333"><rect x="0" y="0" width="1.2" height="1.2"/><rect x="0" y="3" width="1.2" height="1.2"/><rect x="0" y="6" width="1.2" height="1.2"/><rect x="0" y="9" width="1.2" height="1.2"/><rect x="2.5" y="0" width="5" height="1.2"/><rect x="2.5" y="2" width="5" height="1.2"/><rect x="2.5" y="4" width="5" height="1.2"/><rect x="2.5" y="6" width="5" height="1.2"/><rect x="2.5" y="8" width="5" height="1.2"/><rect x="2.5" y="10" width="5" height="1.2"/></g></svg>
<div class="gh" style="left:55px">Reduzido</div>
<div class="gh" style="left:138px">Venda Descrição</div>
<div class="gh" style="left:753px">Valor Unitário</div>
<div class="gh" style="left:862px">Valor Total</div>
<div class="gh" style="left:954px">Q</div>
<!-- rows -->
<div class="gc" style="left:55px;top:328px">100254</div>
<div class="gc" style="left:138px;top:328px">AGUA DE COCO PURO COCO 1LT teste BB</div>
<div class="gc r" style="left:760px;width:97px;top:328px">2.51</div>
<div class="gc r" style="left:860px;width:89px;top:328px">12.55</div>
<div class="gc" style="left:55px;top:349px">100009</div>
<div class="gc" style="left:138px;top:349px;color:#d8ecff">ABACAXI EM RODELAS TRIANGULO 400G</div>
<div class="gc r" style="left:760px;width:97px;top:349px;color:#d8ecff">66.00</div>
<div class="gc r" style="left:860px;width:89px;top:349px;color:#d8ecff">198.00</div>
<div class="gc" style="left:55px;top:369px">100246</div>
<div class="gc" style="left:138px;top:369px">AGUA CRYSTAL 500ML S/GGG</div>
<div class="gc r" style="left:760px;width:97px;top:369px">290.40</div>
<div class="gc r" style="left:860px;width:89px;top:369px">290.40</div>
<!-- yellow block -->
<div class="a" style="left:453px;top:303px;width:299px;height:84px;background:#d8a818"></div>
<div class="a" style="left:455px;top:305px;width:295px;height:20px;background:#eee868"></div>
<div class="a" style="left:455px;top:325px;width:295px;height:60px;background:#fdf865"></div>
<div class="a" style="left:455px;top:346px;width:295px;height:20px;background:#0d7152"></div>
<div class="a" style="left:455px;top:324px;width:295px;height:1px;background:#333"></div>
<div class="a" style="left:547px;top:305px;width:1px;height:20px;background:#333"></div>
<div class="a" style="left:602px;top:305px;width:1px;height:20px;background:#333"></div>
<div class="a" style="left:547px;top:325px;width:1px;height:60px;background:#b8b040"></div>
<div class="a" style="left:602px;top:325px;width:1px;height:60px;background:#b8b040"></div>
<div class="a" style="left:455px;top:345px;width:295px;height:1px;background:#c8c050"></div>
<div class="a" style="left:455px;top:366px;width:295px;height:1px;background:#c8c050"></div>
<div class="gh" style="left:455px">Quantidade</div>
<div class="gh" style="left:549px">Und.</div>
<div class="gh" style="left:608px">Quantidade Movimenta</div>
<svg class="a" style="left:733px;top:310px" width="11" height="9" viewBox="0 0 11 9"><path d="M5.5 0.8 L10.2 8.3 L0.8 8.3Z" fill="none" stroke="#a0a080" stroke-width="1"/></svg>
<div class="gc r" style="left:460px;width:86px;top:328px">5.00</div>
<div class="gc" style="left:549px;top:328px">UNID</div>
<div class="gc r" style="left:610px;width:138px;top:328px">5.00</div>
<div class="gc r" style="left:460px;width:86px;top:349px;color:#a0e880">3.00</div>
<div class="gc" style="left:549px;top:349px;color:#a0e880">FD</div>
<div class="gc r" style="left:610px;width:138px;top:349px;color:#a0e880">9.00</div>
<div class="gc r" style="left:460px;width:86px;top:369px">1.00</div>
<div class="gc" style="left:549px;top:369px">FD</div>
<div class="gc r" style="left:610px;width:138px;top:369px">12.00</div>
<div class="a" style="left:39px;top:386px;width:923px;height:1px;background:#c8c8c8"></div>

<!-- footer -->
<style>.fb{position:absolute;top:681px;height:21px;border:1px solid #a8a8a8;background:#f0f0f0}
.ft{position:absolute;white-space:nowrap;font-family:"Liberation Sans",sans-serif;font-size:12.5px;line-height:14px;top:685px;color:#111;letter-spacing:-0.45px}</style>
<div class="fb" style="left:55px;width:80px"></div>
<div class="ft" style="left:58px">3 Itens</div>
<div class="fb" style="left:455px;width:91px"></div>
<div class="ft r" style="left:460px;width:83px">9.00</div>
<div class="fb" style="left:862px;width:88px"></div>
<div class="ft r" style="left:865px;width:82px">$ 500.95</div>
<div class="fb" style="left:955px;width:151px"></div>
<div class="ft r" style="left:960px;width:143px">0.00</div>
<div class="fb" style="left:1332px;width:139px"></div>
<div class="ft r" style="left:1335px;width:133px">$ 500.95</div>

<!-- checkbox row -->
<div class="a" style="left:13px;top:704px;width:1464px;height:2px;background:#d0d0d0"></div>
<div class="a" style="left:13px;top:706px;width:1464px;height:23px;background:#f0f0f0"></div>

<!-- status bar -->
<div class="a" style="left:13px;top:729px;width:1464px;height:25px;background:#f0f0f0"></div>

<!-- checkbox row content -->
<style>.cb{position:absolute;width:12px;height:12px;background:#fff;border:1px solid #9a9a9a}
.sp{position:absolute;top:731px;height:23px;border-left:2px solid #c4c4c4;border-top:2px solid #c4c4c4;border-right:1px solid #fafafa;background:#f0f0f0}
.st{position:absolute;white-space:nowrap;font-family:"Liberation Sans",sans-serif;font-size:13px;font-weight:700;line-height:15px;top:736px;color:#111;text-align:center}</style>
<div class="a" style="left:13px;top:727px;width:1464px;height:2px;background:#c8c8c8"></div>
<div class="cb" style="left:25px;top:711px"></div>
<div class="t" style="left:42px;top:710px;font-size:12.5px;line-height:15px;color:#111;letter-spacing:-0.46px">Manter Dados do Último Lançto</div>
<div class="cb" style="left:218px;top:711px"></div>
<svg class="a" style="left:220px;top:713px" width="9" height="9" viewBox="0 0 9 9"><path d="M0.8 4.5 L3.3 7.2 L8.2 1.2" stroke="#000" stroke-width="1.8" fill="none"/></svg>
<div class="t" style="left:234px;top:710px;font-size:12.5px;line-height:15px;color:#111;letter-spacing:-0.46px">Manter Vendedor do Último Lançto</div>
<!-- status bar -->
<div class="a" style="left:13px;top:731px;width:32px;height:23px;background:#f0f0f0;border-left:1px solid #fafafa;border-top:1px solid #fafafa;border-right:2px solid #c4c4c4;border-bottom:1px solid #c4c4c4"></div>
<svg class="a" style="left:19px;top:738px" width="18" height="9" viewBox="0 0 18 9"><rect x="0" y="0" width="18" height="9" fill="#7a7a7a"/><path d="M0 0 L3 4.5 L0 9Z" fill="#b8b8b8"/><rect x="3" y="0" width="15" height="2" fill="#9a9a9a"/></svg>
<div class="sp" style="left:47px;width:89px"></div>
<div class="st" style="left:47px;width:89px;color:#888;font-size:12.5px">Consulta</div>
<div class="sp" style="left:138px;width:117px"></div>
<div class="cb" style="left:146px;top:736px;width:12px;height:12px"></div>
<div class="st" style="left:163px;letter-spacing:0.2px">Auto-Salvar</div>
<div class="sp" style="left:257px;width:460px"></div>
<div class="st" style="left:257px;width:460px;color:#14147a;font-size:13.5px;letter-spacing:0.12px">0000017481 - INDUSTRIA 07.10 DIG DIALETO X</div>
<div class="sp" style="left:719px;width:89px"></div>
<div class="st" style="left:719px;width:89px">515691</div>
<div class="sp" style="left:811px;width:29px"></div>
<div class="st" style="left:811px;width:29px;font-weight:400;font-size:12px;color:#a0a0a0">abc</div>
<div class="sp" style="left:842px;width:30px"></div>
<div class="st" style="left:842px;width:30px;font-weight:400;font-size:12px;color:#222">0...9</div>
<div class="sp" style="left:874px;width:31px"></div>
<div class="st" style="left:874px;width:31px;font-weight:400;font-size:12px;color:#a0a0a0">INS</div>
<div class="sp" style="left:908px;width:111px"></div>
<div class="st" style="left:908px;width:111px">0 Registros</div>
<div class="sp" style="left:1021px;width:456px"></div>
<svg class="a" style="left:1070px;top:738px" width="13" height="11" viewBox="0 0 13 11"><rect x="0" y="0" width="2" height="11" fill="#1a60d0"/><path d="M2 5.5 L13 0 L13 11Z" fill="#1a60d0"/></svg>
<svg class="a" style="left:1182px;top:738px" width="10" height="11" viewBox="0 0 10 11"><path d="M0 5.5 L10 0 L10 11Z" fill="#1a60d0"/></svg>
<svg class="a" style="left:1290px;top:738px" width="10" height="11" viewBox="0 0 10 11"><path d="M10 5.5 L0 0 L0 11Z" fill="#1a60d0"/></svg>
<svg class="a" style="left:1398px;top:738px" width="13" height="11" viewBox="0 0 13 11"><rect x="11" y="0" width="2" height="11" fill="#1a60d0"/><path d="M11 5.5 L0 0 L0 11Z" fill="#1a60d0"/></svg>
<svg class="a" style="left:1460px;top:741px" width="14" height="13" viewBox="0 0 14 13"><path d="M2 12 L13 1 M6 12 L13 5 M10 12 L13 9" stroke="#9a9a9a" stroke-width="1"/></svg>
<!-- watermark -->
<div class="t" style="left:1105px;top:710px;font-size:22.5px;line-height:26px;letter-spacing:-0.5px;color:#b4b4b4">Ativar o Windows</div>
<div class="t" style="left:1105px;top:737px;font-size:16.5px;line-height:20px;letter-spacing:-0.25px;color:#b4b4b4">Acesse Configurações para ativar o Windows.</div>

<!-- bottom strip -->
<div class="a" style="left:6px;top:761px;width:1471px;height:1px;background:#70b0c0"></div>
<div class="a" style="left:4px;top:762px;width:1473px;height:1px;background:#2a4a58"></div>
<div class="a" style="left:2px;top:763px;width:1475px;height:1px;background:#d0d0d0"></div>
<div class="a" style="left:2px;top:764px;width:1475px;height:6px;background:#fff"></div>
<div class="a" style="left:2px;top:770px;width:1475px;height:12px;background:#f0f0f0"></div>


<!-- bottom strip content -->
<style>.bs{position:absolute;white-space:nowrap;font-family:"Liberation Sans",sans-serif;font-size:14px;line-height:16px;top:772px;color:#5a6070}</style>
<div class="bs" style="left:10px;font-size:13.6px">21/10/2025 Out/2025</div>
<div class="a" style="left:148px;top:768px;width:1px;height:15px;background:#c0c0c0"></div>
<svg class="a" style="left:153px;top:769px" width="20" height="14" viewBox="0 0 20 14"><path d="M3 14 L3 9 Q3 1 10 1 Q17 1 17 9 L17 14" stroke="#333" stroke-width="1.3" fill="none"/><rect x="1.5" y="9" width="3" height="5" rx="1" fill="none" stroke="#333" stroke-width="1.1"/><rect x="15.5" y="9" width="3" height="5" rx="1" fill="none" stroke="#333" stroke-width="1.1"/></svg>
<div class="t" style="left:182px;top:768px;font-size:19px;line-height:20px;color:#333">@</div>
<svg class="a" style="left:209px;top:773px" width="15" height="10" viewBox="0 0 15 10"><rect x="0" y="0" width="15" height="15" rx="3" fill="#111"/><circle cx="7.5" cy="8" r="3.2" fill="#f0f0f0"/><circle cx="7.5" cy="8" r="1.6" fill="#111"/><circle cx="12" cy="3" r="1.1" fill="#f0f0f0"/></svg>
<div class="t" style="left:236px;top:771px;font-size:17px;font-weight:700;line-height:18px;color:#111">in</div>
<svg class="a" style="left:262px;top:774px" width="18" height="9" viewBox="0 0 18 9"><rect x="0" y="0" width="18" height="14" rx="4" fill="#111"/><path d="M7 3 L12 6 L7 9Z" fill="#f0f0f0"/></svg>
<svg class="a" style="left:290px;top:773px" width="16" height="10" viewBox="0 0 16 10"><path d="M0 1 Q3 5 8 4 Q9 0 13 1 L16 0 L14.5 3 Q14 10 6 12 Q2 12 0 10 Q5 9 6 7 Q2 6 0 1Z" fill="#111"/></svg>
<svg class="a" style="left:318px;top:772px" width="15" height="11" viewBox="0 0 15 11"><rect x="0" y="0" width="15" height="15" rx="2" fill="#111"/><path d="M9.5 15 L9.5 7 L12.5 7 M8 5 Q8 2.5 11 2.5 L12.5 2.5" stroke="#f0f0f0" stroke-width="2" fill="none"/></svg>
<svg class="a" style="left:345px;top:771px" width="16" height="12" viewBox="0 0 16 12"><path d="M1 1 L7 0 L8 3 L3 4Z" fill="#50d030"/><path d="M6 2 L16 1 L12 5 L9 5 L8 12 L5 12 L6 5Z" fill="#1a90e0"/></svg>
<svg class="a" style="left:367px;top:768px" width="24" height="15" viewBox="0 0 24 15"><path d="M1 7 L12 1.5 L23 7 L12 12.5Z" stroke="#333" stroke-width="1.3" fill="none"/><path d="M5 9 L5 15 M19 9 L19 15" stroke="#333" stroke-width="1.3"/></svg>
<div class="bs" style="left:398px;color:#222;font-size:12.5px;letter-spacing:-0.15px">Teorema Sistemas</div>
<div class="a" style="left:502px;top:768px;width:1px;height:15px;background:#c0c0c0"></div>
<div class="bs" style="left:507px;font-size:12.6px">Gestão Administrativa - v 24.11a09.18a</div>
<div class="a" style="left:737px;top:768px;width:1px;height:15px;background:#c0c0c0"></div>
<div class="bs" style="left:990px;color:#333">0001 NOME DA EMPRESA - 1</div>
<div class="a" style="left:1416px;top:768px;width:1px;height:15px;background:#c0c0c0"></div>
<div class="bs" style="left:1421px;color:#333">Reg: TEO</div>

<!-- popup -->
<div class="a" style="left:962px;top:0;width:515px;height:447px;background:#fff"></div>
<div class="a" style="left:962px;top:0;width:4px;height:447px;background:#d8d8d8"></div>

<style>.pt{position:absolute;white-space:nowrap;font-family:"Liberation Sans",sans-serif;font-size:15.5px;font-weight:700;line-height:16px;color:#2a2a2a;left:1092px}
.ps{position:absolute;white-space:nowrap;font-family:"Liberation Sans",sans-serif;font-size:14.5px;line-height:15px;color:#555;left:1092px}
.pq{position:absolute;background:#ffff66;border:1.5px solid #ffd21f}
.pqt{position:absolute;white-space:nowrap;font-family:"Liberation Sans",sans-serif;font-size:14.5px;line-height:15px;color:#333;left:1092px;word-spacing:-1px;letter-spacing:-0.4px}
.pr{position:absolute;white-space:nowrap;font-family:"Liberation Sans",sans-serif;font-size:14.5px;line-height:15px;color:#444;left:1092px;letter-spacing:-0.4px}
.pp{position:absolute;white-space:nowrap;font-family:"Liberation Sans",sans-serif;font-size:18px;font-weight:700;line-height:18px;color:#ea4236;left:1092px}
.pl{position:absolute;left:1092px;width:385px;height:2px;background:#e0e0e8}</style>
<!-- card 1 -->
<svg class="a" style="left:972px;top:41px" width="109" height="67" viewBox="0 0 109 67">
<defs><radialGradient id="wg" cx="0.68" cy="0.62" r="0.8"><stop offset="0" stop-color="#ffffff"/><stop offset="0.35" stop-color="#eef4fb"/><stop offset="0.7" stop-color="#b4d0ee"/><stop offset="1" stop-color="#5a94d4"/></radialGradient>
<linearGradient id="gl" x1="0" y1="0" x2="0" y2="1"><stop offset="0" stop-color="#e8f0f8" stop-opacity="0.2"/><stop offset="0.5" stop-color="#dce8f4" stop-opacity="0.8"/><stop offset="1" stop-color="#4a84c8"/></linearGradient>
<linearGradient id="bt" x1="0" y1="0" x2="1" y2="0"><stop offset="0" stop-color="#2a84dc"/><stop offset="0.3" stop-color="#3a90e0"/><stop offset="0.6" stop-color="#8ab8e8"/><stop offset="1" stop-color="#b8d4f0"/></linearGradient></defs>
<rect width="109" height="67" fill="url(#wg)"/>
<path d="M49 10 Q54 2 60 0 L109 0 L109 16 Q98 22 86 21 Q74 21 64 25 Q56 25 50 18Z" fill="url(#bt)" opacity="0.9"/>
<path d="M56 6 L68 3 L71 22 L60 25Z" fill="#1a70d8" opacity="0.55"/>
<path d="M78 6 Q90 4 104 8 L100 14 Q88 12 80 14Z" fill="#ffffff" opacity="0.45"/>
<path d="M53 18 L39 46 L43 47 L57 22Z" fill="#c4dcf2" stroke="#5a94cc" stroke-width="0.7" opacity="0.9"/>
<path d="M10 36 L14 67 L58 67 L61 36 Q36 31 10 36Z" fill="url(#gl)"/>
<ellipse cx="35.5" cy="36.5" rx="25.5" ry="6" fill="none" stroke="#a8bcd0" stroke-width="1.2"/>
<path d="M14 48 Q36 43 58 48 L58 57 Q36 53 14 57Z" fill="#eef2f6" opacity="0.75"/>
<path d="M24 47 L30 46 L32 49 L26 50Z" fill="#3a4a5a" opacity="0.6"/>
<path d="M36 50 Q42 48 48 51 Q42 54 36 52Z" fill="#8a9aaa" opacity="0.5"/>
<path d="M14 58 L58 56 L57 67 L15 67Z" fill="#3a78c0" opacity="0.6"/>
</svg>
<div class="pt" style="top:7px;letter-spacing:0.5px">AGUA CRYSTAL 500ML S/GGG</div>
<div class="ps" style="top:28px;letter-spacing:0.08px">AGUA CRYSTAL 500ML S/G</div>
<div class="pq" style="left:1084px;top:50px;width:88px;height:21px"></div>
<div class="pqt" style="top:54px">QTD: 1 FD</div>
<div class="pr" style="top:75px">REF: 0001_100246</div>
<div class="pp" style="top:107px">R$ 290,40</div>
<div class="pl" style="top:135px"></div>
<!-- card 2 -->
<svg class="a" style="left:1005px;top:184px" width="40" height="83" viewBox="0 0 40 83">
<ellipse cx="22" cy="80" rx="17" ry="2" fill="#c8c8c8" opacity="0.7"/>
<path d="M1 4 L14 2 L14 81 L3 78Z" fill="#cfdcae"/>
<path d="M3 20 L12 19 L12 23 L3 24Z" fill="#2a7a3a"/>
<path d="M14 2 L38 0 L39 78 L14 81Z" fill="#e6ecca"/>
<ellipse cx="23" cy="9" rx="4.5" ry="2.5" fill="#d83a24"/>
<path d="M15 17 Q26 13 38 15 L38 31 Q27 37 16 37 Q13 27 15 17Z" fill="#2a7a3a"/>
<path d="M17 26 L22 18 M22 18 Q27 19 24 24 M26 27 L28 21 L31 27 L34 21 M20 34 Q18 29 23 29 M26 34 Q24 30 28 30 Q31 31 28 34Z" stroke="#f0f8e8" stroke-width="1.5" fill="none"/>
<path d="M14 40 L39 38 L39 52 L14 54Z" fill="#b4d8ea" opacity="0.8"/>
<circle cx="26" cy="63" r="11.5" fill="#5fb035"/>
<circle cx="23" cy="60" r="6" fill="#8ccc58" opacity="0.7"/>
<ellipse cx="26" cy="53" rx="3" ry="1.5" fill="#c8a068"/>
<path d="M14 74 L39 73 L39 78 L14 81Z" fill="#dfe2c8"/>
</svg>
<div class="pt" style="top:158px;letter-spacing:0.1px">AGUA DE COCO PURO COCO 1LT teste BB</div>
<div class="ps" style="top:179px;letter-spacing:-0.37px">AGUA DE COCO PURO 1LT</div>
<div class="pq" style="left:1082px;top:202px;width:100px;height:19px"></div>
<div class="pqt" style="top:206px">QTD: 5 UNID</div>
<div class="pr" style="top:226px">REF: 0001_100254</div>
<div class="pp" style="top:259px;letter-spacing:-0.3px">R$ 2,51</div>
<div class="pl" style="top:286px"></div>
<!-- card 3 -->
<svg class="a" style="left:1015px;top:367px" width="22" height="22" viewBox="0 0 22 22"><circle cx="11" cy="11" r="11" fill="#0d3a66"/><rect x="9.6" y="5" width="2.8" height="8" rx="1" fill="#fff"/><circle cx="11" cy="16" r="1.5" fill="#fff"/></svg>
<div class="pt" style="top:310px;letter-spacing:0.24px">ABACAXI EM RODELAS TRIANGULO 400G</div>
<div class="ps" style="top:330px;letter-spacing:0px">4592731559529576829656515997891479457</div>
<div class="pq" style="left:1081px;top:352px;width:91px;height:24px"></div>
<div class="pqt" style="top:357px">QTD: 3 FD</div>
<div class="pr" style="top:378px">REF: 0001_100009</div>
<div class="pp" style="top:409px">R$ 66,00</div>
<div class="pl" style="top:438px"></div>

<div class="a" style="left:0;top:782px;width:1477px;height:1px;background:#000"></div>
<div class="a" style="left:0;top:0;width:1477px;height:1px;background:#000"></div>
<div class="a" style="left:1476px;top:0;width:1px;height:783px;background:#000"></div>
</body></html>
